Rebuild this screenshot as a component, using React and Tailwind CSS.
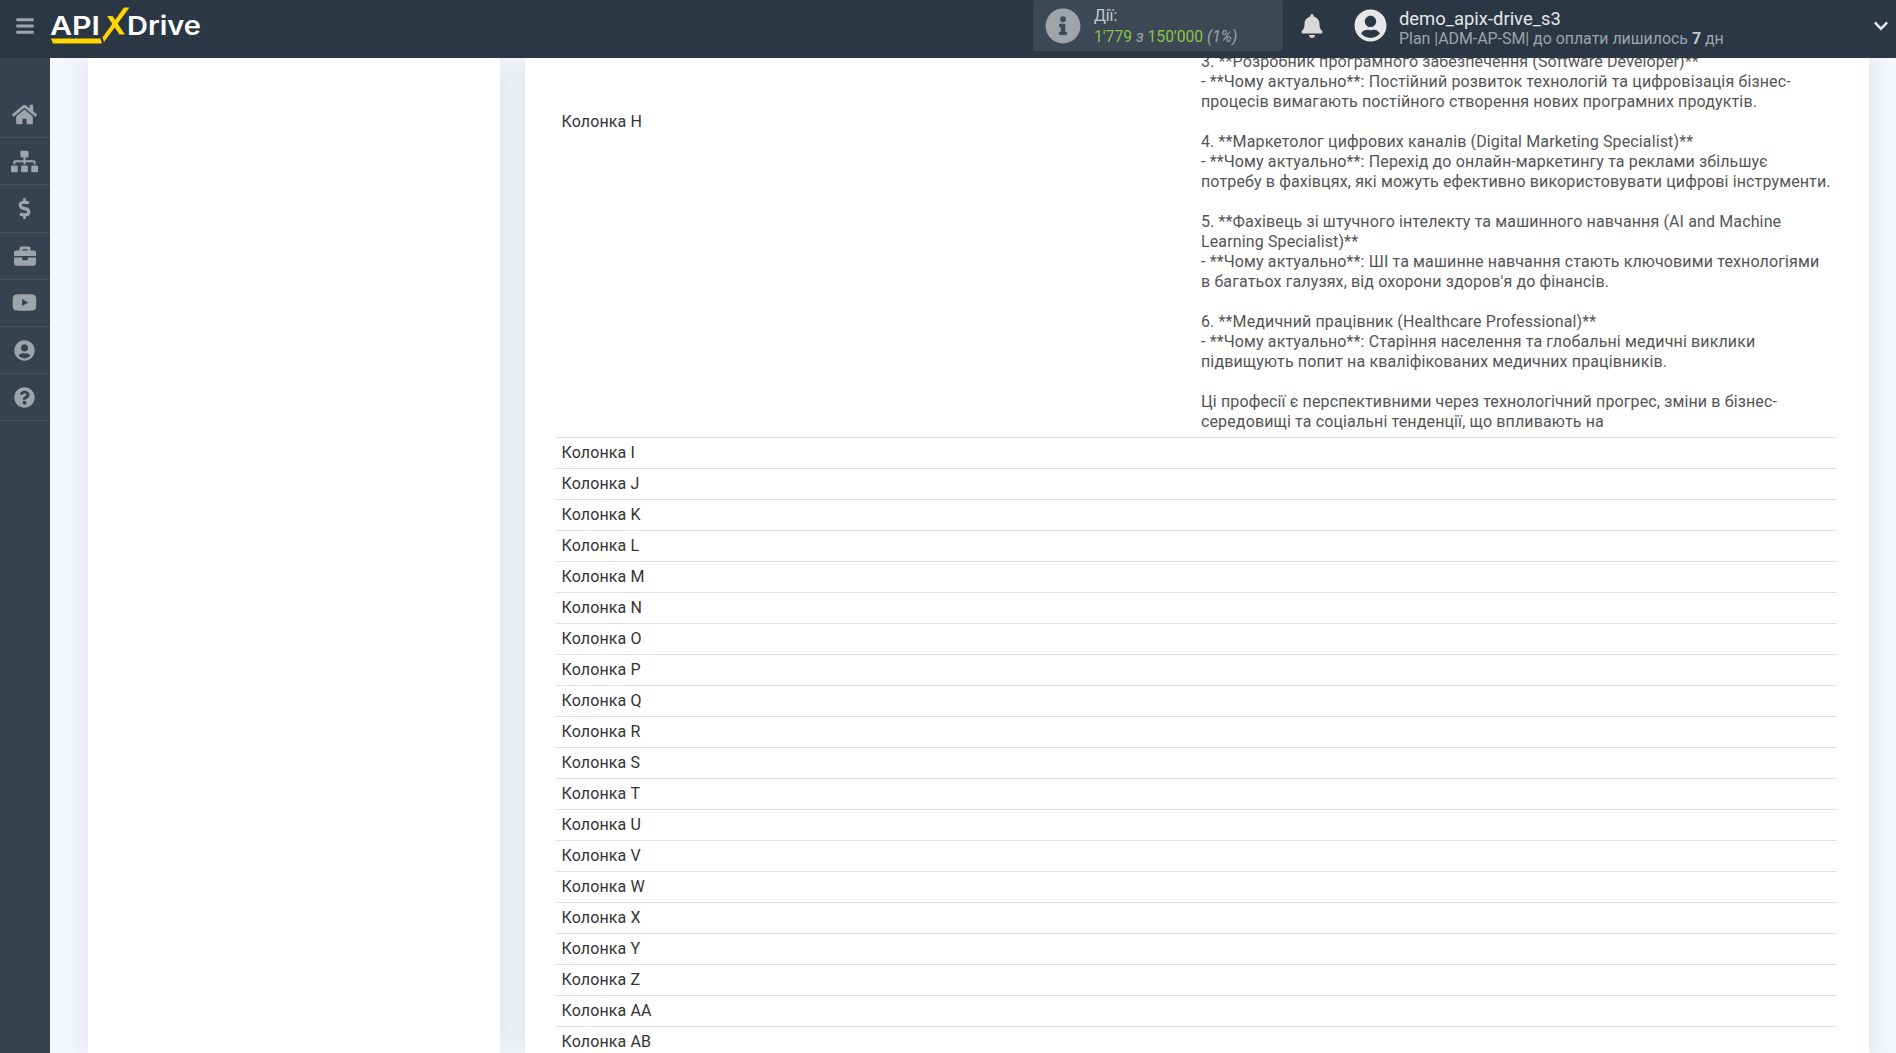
import React from "react";
import { FaBars, FaHome, FaSitemap, FaDollarSign, FaBriefcase, FaYoutube, FaUserCircle, FaQuestionCircle, FaInfoCircle, FaBell, FaChevronDown } from "react-icons/fa";

const side = [
  [FaHome, 25],
  [FaSitemap, 27],
  [FaDollarSign, 21],
  [FaBriefcase, 22],
  [FaYoutube, 25],
  [FaUserCircle, 21],
  [FaQuestionCircle, 21],
];

const lines = [
  "3. **Розробник програмного забезпечення (Software Developer)**",
  "- **Чому актуально**: Постійний розвиток технологій та цифровізація бізнес-",
  "процесів вимагають постійного створення нових програмних продуктів.",
  "",
  "4. **Маркетолог цифрових каналів (Digital Marketing Specialist)**",
  "- **Чому актуально**: Перехід до онлайн-маркетингу та реклами збільшує",
  "потребу в фахівцях, які можуть ефективно використовувати цифрові інструменти.",
  "",
  "5. **Фахівець зі штучного інтелекту та машинного навчання (AI and Machine",
  "Learning Specialist)**",
  "- **Чому актуально**: ШІ та машинне навчання стають ключовими технологіями",
  "в багатьох галузях, від охорони здоров'я до фінансів.",
  "",
  "6. **Медичний працівник (Healthcare Professional)**",
  "- **Чому актуально**: Старіння населення та глобальні медичні виклики",
  "підвищують попит на кваліфікованих медичних працівників.",
  "",
  "Ці професії є перспективними через технологічний прогрес, зміни в бізнес-",
  "середовищі та соціальні тенденції, що впливають на",
];

const cols = "IJKLMNOPQRSTUVWXYZ".split("").concat(["AA", "AB"]);

function Logo() {
  return (
    <svg width="156" height="40" viewBox="0 0 156 40" className="ml-[15px] shrink-0">
      <text x="0" y="28.5" fontFamily="Inter, sans-serif" fontWeight="600" fontSize="26" fill="#fff" textLength="50" lengthAdjust="spacingAndGlyphs">API</text>
      <path d="M1 32.5H50.5L52 37.5H3Z" fill="#ffd600" />
      <path d="M74 1.5H79.5L54 36L52.5 31.5Z" fill="#ffd600" />
      <path d="M57 10H62.5L75 28.5H69.5Z" fill="#ffd600" />
      <text x="77" y="28.5" fontFamily="Inter, sans-serif" fontWeight="600" fontSize="26" fill="#fff" textLength="74" lengthAdjust="spacingAndGlyphs">Drive</text>
    </svg>
  );
}

export default function App() {
  return (
    <div className="relative h-[1053px] w-[1896px] overflow-hidden bg-[#f4f7fb] font-['Roboto',sans-serif]">
      <header className="relative z-20 flex h-[58px] items-center bg-[#2b3744] pb-[7px]">
        <FaBars className="ml-[15px] shrink-0 text-[20px] text-[#9ea4ab]" />
        <Logo />
        <div className="ml-[827px] flex h-[51px] w-[250px] items-center rounded-[3px] bg-[#3c4955]">
          <FaInfoCircle className="ml-[12px] shrink-0 text-[36px] text-[#9ea4ab]" />
          <div className="ml-[13px] mt-px text-[15.7px] leading-[21px]">
            <div className="text-[#c5c9ce]">Дії:</div>
            <div className="text-[#8bc34a]">
              1'779 <span className="italic text-[#9ea4ab]">з</span> 150'000 <span className="italic text-[#9ea4ab]">(1%)</span>
            </div>
          </div>
        </div>
        <FaBell className="ml-[17px] shrink-0 text-[24px] text-[#d6d8da]" />
        <FaUserCircle className="ml-[30px] shrink-0 text-[33px] text-[#e6e7e8]" />
        <div className="ml-[12px] mt-[6px] w-[462px]">
          <div className="text-[18.4px] leading-[21px] text-[#e6e7e8]">demo_apix-drive_s3</div>
          <div className="text-[15.9px] leading-[20px] text-[#9ea4ab]">
            Plan |ADM-AP-SM| до оплати лишилось <b className="text-[#c5c9ce]">7</b> дн
          </div>
        </div>
        <FaChevronDown className="ml-[12px] shrink-0 text-[16px] text-[#e6e7e8]" />
      </header>

      <div className="flex h-[995px]">
        <aside className="w-[50px] shrink-0 bg-[#36424f] pt-[33px]">
          {side.map(([Icon, size], i) => (
            <div key={i} className="flex h-[47.2px] items-center justify-center border-b border-[#465260] pr-px text-[#9ea4ab]">
              <Icon style={{ fontSize: size }} />
            </div>
          ))}
        </aside>

        <main className="flex flex-1 gap-[25px] overflow-hidden pl-[38px]">
          <section className="w-[412px] shrink-0 bg-white shadow-[0_0_25px_rgba(40,50,70,0.13)]" />
          <section className="w-[1344px] shrink-0 bg-white pl-[31px] pr-[32px] shadow-[0_0_25px_rgba(40,50,70,0.13)]">
            <div className="-mt-[6px] flex h-[386px] border-b border-[#dfe0e2] text-[16px] leading-[20px] tracking-[0.13px]">
              <div className="w-[645px] shrink-0 pl-[5.5px] pt-[60px] text-[#333]">Колонка H</div>
              <div className="whitespace-pre text-[#555]">
                {lines.map((l, i) => (
                  <div key={i} className="h-[20px]">{l}</div>
                ))}
              </div>
            </div>
            {cols.map((c) => (
              <div key={c} className="flex h-[31px] items-center border-b border-[#dfe0e2] pl-[5.5px] text-[16px] tracking-[0.13px] text-[#333]">
                Колонка {c}
              </div>
            ))}
          </section>
        </main>
      </div>
    </div>
  );
}
